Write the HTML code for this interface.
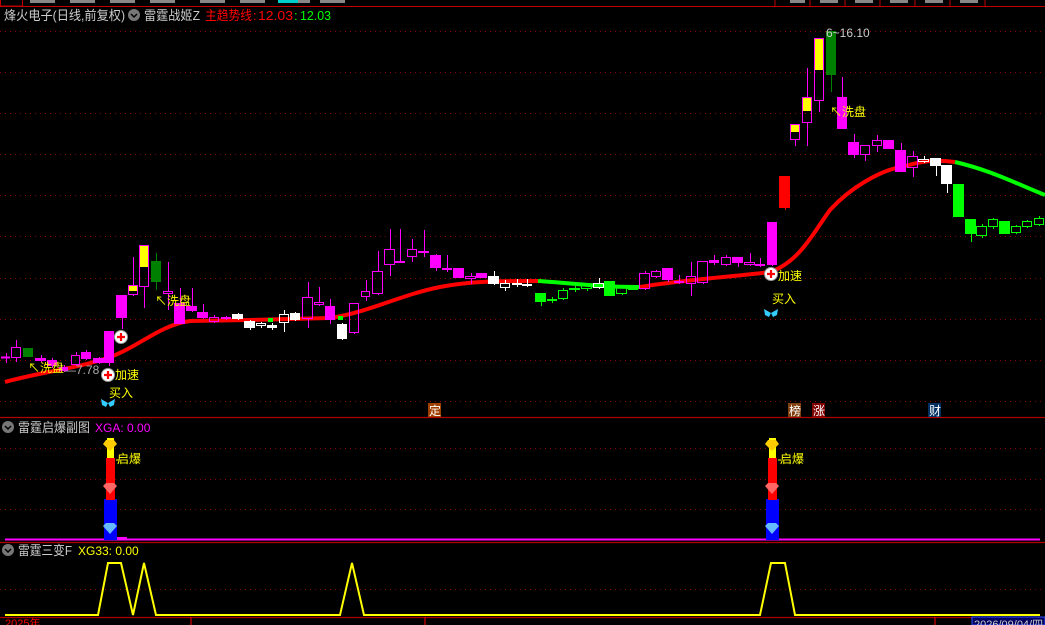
<!DOCTYPE html>
<html><head><meta charset="utf-8"><style>
html,body{margin:0;padding:0;background:#000;}
body{width:1045px;height:625px;overflow:hidden;position:relative;font-family:"Liberation Sans","Noto Sans CJK SC",sans-serif;}
svg{position:absolute;left:0;top:0;}
.t{font-family:"Liberation Sans","Noto Sans CJK SC",sans-serif;}
</style></head><body>
<svg id="s" width="1045" height="625" xmlns="http://www.w3.org/2000/svg">
<rect width="1045" height="625" fill="#000"/>
<line x1="0" y1="6.5" x2="1045" y2="6.5" stroke="#c00000" stroke-width="1"/>
<rect x="0.5" y="-1" width="22" height="7" fill="none" stroke="#c00000"/>
<g stroke="#c00000"><line x1="775" y1="0" x2="775" y2="6"/><line x1="810" y1="0" x2="810" y2="6"/><line x1="845" y1="0" x2="845" y2="6"/><line x1="880" y1="0" x2="880" y2="6"/><line x1="915" y1="0" x2="915" y2="6"/><line x1="950" y1="0" x2="950" y2="6"/><line x1="985" y1="0" x2="985" y2="6"/></g>
<g fill="#888"><rect x="30" y="0" width="25" height="3"/><rect x="70" y="0" width="25" height="3"/><rect x="110" y="0" width="25" height="3"/><rect x="150" y="0" width="25" height="3"/><rect x="200" y="0" width="25" height="3"/><rect x="240" y="0" width="25" height="3"/><rect x="285" y="0" width="25" height="3"/><rect x="320" y="0" width="25" height="3"/><rect x="790" y="0" width="15" height="3"/><rect x="820" y="0" width="18" height="3"/><rect x="855" y="0" width="18" height="3"/><rect x="890" y="0" width="18" height="3"/><rect x="925" y="0" width="18" height="3"/><rect x="960" y="0" width="18" height="3"/></g>
<rect x="278" y="0" width="20" height="3" fill="#0cc"/>
<g stroke="#8b0000" stroke-dasharray="1,4" stroke-width="1">
<line x1="0" y1="31.5" x2="1045" y2="31.5"/><line x1="0" y1="72.5" x2="1045" y2="72.5"/><line x1="0" y1="113.5" x2="1045" y2="113.5"/><line x1="0" y1="154.5" x2="1045" y2="154.5"/><line x1="0" y1="195.5" x2="1045" y2="195.5"/><line x1="0" y1="236.5" x2="1045" y2="236.5"/><line x1="0" y1="278.5" x2="1045" y2="278.5"/><line x1="0" y1="319.5" x2="1045" y2="319.5"/><line x1="0" y1="360.5" x2="1045" y2="360.5"/><line x1="0" y1="401.5" x2="1045" y2="401.5"/>
<line x1="0" y1="448.5" x2="1045" y2="448.5"/><line x1="0" y1="479.5" x2="1045" y2="479.5"/><line x1="0" y1="509.5" x2="1045" y2="509.5"/>
<line x1="0" y1="589.5" x2="1045" y2="589.5"/>
</g>
<g stroke="#b00000" stroke-width="1.2"><line x1="0" y1="417.5" x2="1045" y2="417.5"/><line x1="0" y1="542.5" x2="1045" y2="542.5"/><line x1="0" y1="617.5" x2="1045" y2="617.5"/></g>
<path d="M5,382 C40,372 80,368 110,357 C140,346 160,325 190,321 L250,320 L330,318 C370,312 400,295 440,287 C470,281 500,281 538,281" fill="none" stroke="#ff0000" stroke-width="4"/>
<path d="M538,281 C570,283 600,287 640,287" fill="none" stroke="#00ff00" stroke-width="4"/>
<path d="M640,287 C680,280 730,277 770,272 C800,262 815,230 830,210 C850,188 880,170 905,166 C925,160 940,160 955,162" fill="none" stroke="#ff0000" stroke-width="4"/>
<path d="M955,162 C990,170 1015,183 1045,195" fill="none" stroke="#00ff00" stroke-width="4"/>
<rect x="268" y="318" width="5" height="4" fill="#0f0"/><rect x="338" y="316" width="5" height="4" fill="#0f0"/>
<g id="c"></g>
<g id="ic"></g>
<text x="826" y="37" fill="#ccc" font-size="12" class="t">6~16.10</text>
<text x="28" y="372" fill="#ff0" font-size="12" class="t">↖洗盘</text>
<text x="64" y="374" fill="#aaa" font-size="12" class="t">—7.78</text>
<text x="155" y="305" fill="#ff0" font-size="12" class="t">↖洗盘</text>
<text x="830" y="116" fill="#ff0" font-size="12" class="t">↖洗盘</text>
<text x="115" y="379" fill="#ff0" font-size="12" class="t">加速</text>
<text x="778" y="280" fill="#ff0" font-size="12" class="t">加速</text>
<text x="109" y="397" fill="#ff0" font-size="12" class="t">买入</text>
<text x="772" y="303" fill="#ff0" font-size="12" class="t">买入</text>
<rect x="428" y="403" width="13" height="14" fill="#a04000"/><text x="429" y="415" fill="#fff" font-size="12" class="t">定</text>
<rect x="788" y="403" width="13" height="14" fill="#804010"/><text x="789" y="415" fill="#fff" font-size="12" class="t">榜</text>
<rect x="812" y="403" width="13" height="14" fill="#800000"/><text x="813" y="415" fill="#fff" font-size="12" class="t">涨</text>
<rect x="928" y="403" width="13" height="14" fill="#003060"/><text x="929" y="415" fill="#fff" font-size="12" class="t">财</text>
<text x="4" y="20" fill="#ccc" font-size="13" class="t" textLength="121" lengthAdjust="spacingAndGlyphs">烽火电子(日线,前复权)</text>
<circle cx="134" cy="15" r="6" fill="#777"/><path d="M131,14 L134,17 L137,14" stroke="#000" stroke-width="1.5" fill="none"/>
<text x="144" y="20" fill="#ccc" font-size="13" class="t" textLength="56" lengthAdjust="spacingAndGlyphs">雷霆战姬Z</text>
<text x="205" y="20" fill="#f00" font-size="13" class="t" textLength="47" lengthAdjust="spacingAndGlyphs">主趋势线</text>
<text x="253" y="20" fill="#f00" font-size="13" class="t">:</text>
<text x="258" y="20" fill="#f00" font-size="13" class="t" textLength="35" lengthAdjust="spacingAndGlyphs">12.03</text>
<text x="294" y="20" fill="#0f0" font-size="13" class="t">:</text>
<text x="300" y="20" fill="#0f0" font-size="13" class="t" textLength="31" lengthAdjust="spacingAndGlyphs">12.03</text>
<circle cx="8" cy="427" r="6" fill="#777"/><path d="M5,426 L8,429 L11,426" stroke="#000" stroke-width="1.5" fill="none"/>
<text x="18" y="432" fill="#ccc" font-size="13" class="t" textLength="72" lengthAdjust="spacingAndGlyphs">雷霆启爆副图</text>
<text x="95" y="432" fill="#f0f" font-size="12" class="t">XGA: 0.00</text>
<line x1="5" y1="539.5" x2="1040" y2="539.5" stroke="#f0f" stroke-width="2"/>
<g id="sb"></g>
<text x="117" y="463" fill="#ff0" font-size="12" class="t">启爆</text>
<text x="780" y="463" fill="#ff0" font-size="12" class="t">启爆</text>
<circle cx="8" cy="550" r="6" fill="#777"/><path d="M5,549 L8,552 L11,549" stroke="#000" stroke-width="1.5" fill="none"/>
<text x="18" y="555" fill="#ccc" font-size="13" class="t" textLength="54" lengthAdjust="spacingAndGlyphs">雷霆三变F</text>
<text x="78" y="555" fill="#ff0" font-size="12" class="t">XG33: 0.00</text>
<polyline points="5,615 98,615 108,563 121,563 133,615 144,563 156,615 340,615 352,563 364,615 760,615 771,563 785,563 795,615 1040,615" fill="none" stroke="#ff0" stroke-width="2"/>
<text x="5" y="627" fill="#f00" font-size="11" class="t">2025年</text>
<g stroke="#f00"><line x1="191" y1="617" x2="191" y2="625"/><line x1="425" y1="617" x2="425" y2="625"/><line x1="935" y1="617" x2="935" y2="625"/></g>
<rect x="972" y="617" width="73" height="8" fill="#000060" stroke="#3050ff"/>
<text x="974" y="628" fill="#ccc" font-size="11" class="t">2026/09/04/四</text>
</svg>
<script>
var NS="http://www.w3.org/2000/svg";
function el(p,t,a){var e=document.createElementNS(NS,t);for(var k in a)e.setAttribute(k,a[k]);p.appendChild(e);return e;}
var M="#ff00ff",W="#ffffff",G="#00ff00",DG="#008000",R="#ff0000",Y="#ffff00";
var d=[
[1,10,357,358,353,363,M,1],[11,21,347,358,340,362,M,0],[23,33,348,357,348,357,DG,1],[35,46,358,361,355,362,M,1],
[47,57,360,366,358,368,M,1],[59,68,367,371,365,372,M,1],[71,80,355,365,352,366,M,0],[81,91,352,359,350,360,M,1],
[93,104,358,363,357,364,M,1],[104,114,331,363,331,366,M,1],[116,127,295,318,295,329,M,1],[128,138,285,295,257,296,M,0,291],
[139,149,245,287,245,308,M,0,267],[151,161,261,282,253,290,DG,1],[163,173,291,294,262,310,M,0],[174,185,303,324,288,324,M,1],
[186,197,306,311,288,312,M,1],[197,208,312,318,304,319,M,1],[209,219,317,322,315,323,M,0],[221,231,317,319,316,320,M,1],
[232,243,314,319,313,320,W,1],[244,255,321,328,320,330,W,1],[256,266,323,326,322,328,W,0],[267,277,325,328,323,330,W,1],
[279,289,314,323,310,332,W,0],[290,300,313,320,312,321,W,1],[302,313,297,319,282,328,M,0],[314,324,302,305,287,306,M,0],
[325,335,306,320,299,324,M,1],[337,347,324,339,323,340,W,1],[349,359,303,333,303,334,M,0],
[361,370,291,297,280,301,M,0],[372,383,271,294,251,295,M,0],[384,395,249,265,229,276,M,0],[395,405,261,262,229,262,M,0],
[407,417,249,257,239,262,M,0],[418,429,251,253,230,257,M,0],[430,441,255,268,254,271,M,1],[442,452,268,270,255,272,M,1],
[453,464,268,278,268,278,M,1],[465,476,276,279,273,284,M,0],[476,487,273,278,273,278,M,1],[488,499,276,284,271,285,W,1],
[500,510,283,288,280,291,W,0],[512,522,283,284,279,287,W,0],[522,532,284,285,279,287,W,0],[535,546,293,302,293,306,G,1],
[547,557,299,301,297,303,G,0],[558,568,290,299,288,300,G,0],[569,580,288,290,286,292,G,0],[581,592,284,289,283,291,G,0],
[593,604,283,288,278,289,W,0],[604,615,281,296,281,296,G,1],[616,627,287,294,285,295,G,0],[628,638,285,290,285,290,G,1],
[639,650,273,289,271,290,M,0],[651,661,271,277,270,278,M,0],[662,673,268,280,268,282,M,1],[674,684,281,283,275,284,M,1],
[686,696,276,284,262,296,M,0],[697,708,261,283,261,284,M,0],[709,719,260,263,255,265,M,1],[721,731,257,265,255,266,M,0],
[732,743,257,263,257,267,M,1],[744,755,262,265,253,266,M,0],[755,765,264,266,258,267,M,1],[767,777,222,265,222,266,M,1],
[779,790,176,208,176,210,R,1],[790,800,124,140,124,146,M,0,132],[802,812,97,123,68,146,M,0,111],[814,824,38,101,38,112,M,0,70],
[826,836,31,75,31,92,DG,1],[837,847,97,129,77,129,M,1],[848,859,142,155,134,158,M,1],[860,870,145,155,145,161,M,0],
[872,882,140,146,135,152,M,0],[883,894,140,149,140,149,M,1],[895,906,150,172,143,172,M,1],[907,918,156,168,151,177,M,0],
[918,929,159,162,156,163,W,0],[930,941,158,166,158,176,W,1],[941,952,165,184,165,193,W,1],[953,964,184,217,184,217,G,1],
[965,976,219,234,219,242,G,1],[976,987,226,236,224,238,G,0],[988,998,219,227,218,229,G,0],[999,1010,221,234,221,234,G,1],
[1011,1021,226,233,225,234,G,0],[1022,1032,221,227,220,228,G,0],[1034,1044,218,225,216,226,G,0]
];
var c=document.getElementById("c");
d.forEach(function(a){
 var x0=a[0],x1=a[1],t=a[2],b=a[3],h=a[4],l=a[5],col=a[6],f=a[7],yb=a[8];
 var cx=Math.round((x0+x1)/2)+0.5;
 if(h<t)el(c,"line",{x1:cx,y1:h,x2:cx,y2:t,stroke:col});
 if(l>b)el(c,"line",{x1:cx,y1:b,x2:cx,y2:l,stroke:col});
 if(b-t<2){el(c,"line",{x1:x0,y1:t+0.5,x2:x1,y2:t+0.5,stroke:col,"stroke-width":f?2:1});if(!f){el(c,"rect",{x:x0+0.5,y:t+0.5,width:x1-x0-1,height:Math.max(1,b-t),fill:"none",stroke:col});}return;}
 if(f)el(c,"rect",{x:x0,y:t,width:x1-x0,height:b-t,fill:col});
 else{ if(yb)el(c,"rect",{x:x0+1,y:t,width:x1-x0-2,height:yb-t,fill:Y}); el(c,"rect",{x:x0+0.5,y:t+0.5,width:x1-x0-1,height:b-t-1,fill:"none",stroke:col});}
});
var ic=document.getElementById("ic");
[[121,337],[108,375],[771,274]].forEach(function(p){
 el(ic,"circle",{cx:p[0],cy:p[1],r:6.5,fill:"#fff",stroke:"#999"});
 el(ic,"path",{d:"M"+(p[0]-4)+","+p[1]+"h8M"+p[0]+","+(p[1]-4)+"v8",stroke:"#f00","stroke-width":2.2});
});
[[108,403],[771,313]].forEach(function(p){
 el(ic,"path",{d:"M"+p[0]+","+p[1]+" l-7,-4 l1,6 l4,2 z M"+p[0]+","+p[1]+" l7,-4 l-1,6 l-4,2 z",fill:"#3cf"});
});
var sb=document.getElementById("sb");
[110,772].forEach(function(x){
 el(sb,"rect",{x:x-6,y:499,width:13,height:41,fill:"#0000ff"});
 el(sb,"rect",{x:x-4,y:458,width:9,height:42,fill:"#ff0000"});
 el(sb,"rect",{x:x-3,y:438,width:7,height:20,fill:"#ffff00"});
 el(sb,"path",{d:"M"+(x-7)+","+444+" l3,-4 h8 l3,4 l-7,7 z",fill:"#fc0"});
 el(sb,"path",{d:"M"+(x-7)+","+486+" l3,-3 h8 l3,3 l-7,8 z",fill:"#f66"});
 el(sb,"path",{d:"M"+(x-7)+","+526+" l3,-3 h8 l3,3 l-7,8 z",fill:"#6bf"});
 el(sb,"line",{x1:x+6,y1:460,x2:x+9,y2:460,stroke:"#ff0"});
});
el(sb,"rect",{x:117,y:537,width:10,height:2,fill:"#f0f"});
</script>
</body></html>
